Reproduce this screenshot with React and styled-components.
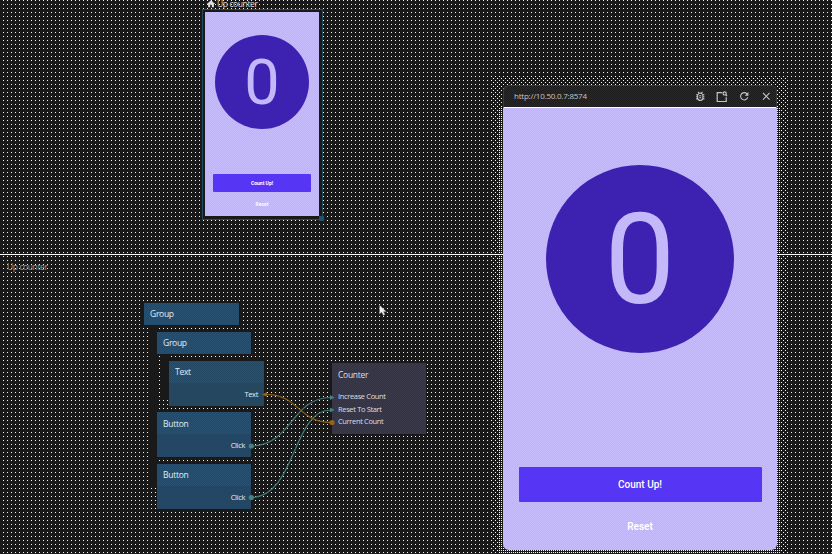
import React from "react";
import styled, { createGlobalStyle, css } from "styled-components";
import { MdClose, MdHome, MdOutlineBugReport, MdRefresh } from "react-icons/md";

const GlobalStyle = createGlobalStyle`
  * { box-sizing: border-box; }
  body { margin: 0; background: #191919; overflow: hidden; }
`;

const dots = (x, y, size = 4) =>
  css`conic-gradient(at 1px 1px, transparent 75%, #f4f6f2 0) ${x}px ${y}px / ${size}px ${size}px`;

const lilac = css`
  background: conic-gradient(#c7bcfc 25%, #bdb3f6 0 50%, #c7bcfc 0 75%, #bdb3f6 0) 0 0 / 2px 2px;
`;

const Workspace = styled.main`
  position: relative;
  display: grid;
  grid-template-rows: 254px 1px 299px;
  width: 832px;
  height: 554px;
  overflow: hidden;
  background: ${dots(3, 0)}, #191919;
  font-family: "Open Sans", "Noto Sans", sans-serif;
`;

const Stage = styled.section`
  position: relative;
`;

const Divider = styled.div`
  background: #fff;
`;

const Artboard = styled.div`
  position: absolute;
  left: 202px;
  top: 0;
`;

const ArtboardTitle = styled.div`
  display: flex;
  align-items: center;
  gap: 1px;
  height: 9px;
  padding: 0 0 2px 4px;
  color: #dcdcdc;
  font-size: 8.5px;
  letter-spacing: -0.4px;
  line-height: 8px;
  white-space: nowrap;
`;

const ArtboardFrame = styled.div`
  position: relative;
  width: 121px;
  height: 211px;
  padding: 2px 3px 3px 2px;
  border: 1px solid #244c5e;
  background: #191919;
`;

const ResizeHandle = styled.div`
  position: absolute;
  right: -2px;
  bottom: -2px;
  width: 5px;
  height: 5px;
  background: #24506b;
`;

const Screen = styled.div`
  display: flex;
  flex-direction: column;
  align-items: center;
  ${lilac}
  width: 100%;
  height: ${(p) => p.$height}px;
  padding-top: ${(p) => p.$top}px;
  font-family: Roboto, sans-serif;
`;

const CounterDisc = styled.div`
  display: flex;
  align-items: center;
  justify-content: center;
  flex: none;
  width: ${(p) => p.$size}px;
  height: ${(p) => p.$size}px;
  padding-top: ${(p) => p.$drop}px;
  border-radius: 50%;
  background: #3d22b2;
  color: #c3b8fa;
  font-size: ${(p) => p.$size * 0.67}px;
  line-height: 1;
`;

const PrimaryButton = styled.div`
  display: flex;
  align-items: center;
  justify-content: center;
  flex: none;
  width: ${(p) => p.$width}px;
  height: ${(p) => p.$height}px;
  margin-top: ${(p) => p.$gap}px;
  border-radius: 1px;
  background: #5735f5;
  color: #fff;
  font-size: ${(p) => p.$font}px;
  font-weight: ${(p) => p.$weight || 500};
`;

const TextButton = styled.div`
  margin-top: ${(p) => p.$gap}px;
  color: #fff;
  font-size: ${(p) => p.$font}px;
  font-weight: 600;
  line-height: 1.2;
`;

const GraphTitle = styled.div`
  padding: 6px 0 0 7px;
  color: #9a9a9a;
  font-size: 8.5px;
  letter-spacing: -0.4px;
  line-height: 11px;
`;

const Node = styled.div`
  position: absolute;
  left: ${(p) => p.$x}px;
  top: ${(p) => p.$y}px;
  width: ${(p) => p.$w || 95}px;
  height: ${(p) => p.$h}px;
  padding: 5px 6px 0;
  color: ${(p) => (p.$grey ? "#dedee4" : "#e3edf4")};
  box-shadow: 0 0 0 1px #191919;
  background: ${(p) =>
    p.$grey
      ? "conic-gradient(#39394a 25%, #343340 0 50%, #3b3a4a 0 75%, #343340 0) 0 0 / 2px 2px"
      : "conic-gradient(#275071 25%, #244965 0 50%, #275071 0 75%, #244965 0) 0 0 / 2px 2px"};
`;

const NodeShade = styled.div`
  position: absolute;
  inset: 22px 0 0;
  background: rgba(33, 52, 68, 0.22);
`;

const NodeName = styled.div`
  position: relative;
  padding-top: ${(p) => p.$drop || 0}px;
  font-size: 8.5px;
  letter-spacing: -0.28px;
  line-height: 11px;
`;

const Ports = styled.div`
  position: absolute;
  right: 6px;
  left: 6px;
  top: 27px;
  display: flex;
  flex-direction: column;
  align-items: ${(p) => (p.$out ? "flex-end" : "flex-start")};
  font-size: 7.5px;
  letter-spacing: -0.35px;
  line-height: 12.5px;
  white-space: nowrap;
`;

const Gutter = styled.div`
  position: absolute;
  left: ${(p) => p.$x}px;
  top: ${(p) => p.$y}px;
  width: 6px;
  height: ${(p) => p.$h}px;
  background: #191919;
`;

const Overlay = styled.svg`
  position: absolute;
  left: 0;
  top: 0;
`;

const ShadowField = styled.div`
  position: absolute;
  left: 493px;
  top: 77px;
  width: 293px;
  height: 477px;
  background: ${dots(0, 1)};
`;

const InnerShadowField = styled.div`
  position: absolute;
  left: 499px;
  top: 107px;
  width: 282px;
  height: 447px;
  background: ${dots(0, 1, 2)};
`;

const PreviewWindow = styled.section`
  position: absolute;
  left: 503px;
  top: 85px;
  width: 274px;
  height: 465px;
  overflow: hidden;
  border-radius: 6px;
  background: #202020;
`;

const PreviewBar = styled.header`
  display: flex;
  align-items: center;
  justify-content: space-between;
  height: 23px;
  padding: 0 4px 0 10px;
  border: 1px solid #3c3c3c;
  border-bottom-color: #fff;
  border-radius: 6px 6px 0 0;
  background: conic-gradient(#292929 25%, #1c1c1c 0 50%, #292929 0 75%, #1c1c1c 0) 0 0 / 2px 2px;
  color: #c6c6c6;
`;

const Address = styled.span`
  padding-bottom: 2px;
  font-size: 8px;
  letter-spacing: -0.23px;
`;

const Tools = styled.div`
  display: flex;
  align-items: center;
  gap: 9.5px;
  font-size: 12.5px;
`;

const InspectIcon = () => (
  <svg width="12" height="12" viewBox="0 0 12 12" fill="none">
    <g stroke="currentColor" strokeWidth="1.2">
      <path d="M6.3 1.7H1.2v8.8h9V6.2" />
      <circle cx="8.7" cy="2.4" r="1.6" />
      <path d="m9.6 3.6 1.5 1.6" />
    </g>
  </svg>
);

const nodes = [
  { x: 144, y: 303, h: 22, name: "Group" },
  { x: 157, y: 332, w: 94, h: 22, name: "Group" },
  { x: 169, y: 361, h: 45, name: "Text", out: ["Text"] },
  { x: 157, y: 412, w: 94, h: 45, name: "Button", drop: 1, out: ["Click"] },
  { x: 157, y: 464, w: 94, h: 45, name: "Button", out: ["Click"] },
  {
    x: 332,
    y: 363,
    w: 94,
    h: 71,
    name: "Counter",
    drop: 1,
    grey: true,
    in: ["Increase Count", "Reset To Start", "Current Count"],
  },
];

function GraphNode({ node }) {
  const ports = node.out || node.in;
  return (
    <Node $x={node.x} $y={node.y - 255} $w={node.w} $h={node.h} $grey={node.grey}>
      {ports && !node.grey && <NodeShade />}
      <NodeName $drop={node.drop}>{node.name}</NodeName>
      {ports && (
        <Ports $out={!!node.out}>
          {ports.map((port) => (
            <span key={port}>{port}</span>
          ))}
        </Ports>
      )}
    </Node>
  );
}

function Wires() {
  return (
    <Overlay width="500" height="299" viewBox="0 255 500 299" fill="none">
      <g stroke="#3f7c7a" strokeWidth="1.2">
        <path d="M251 446C292 446 291 397.5 331 397.5" />
        <path d="M251 497.5C296 497.5 292 410 331 410" />
      </g>
      <path d="M265 394.3C300 394.3 297 422.5 332 422.5" stroke="#8a5a17" strokeWidth="1.2" />
      <g fill="#438481">
        <circle cx="251.3" cy="446" r="2.6" />
        <circle cx="251.3" cy="497.5" r="2.6" />
        <path d="M330 395l4.5 2.5-4.5 2.5zM330 407.5l4.5 2.5-4.5 2.5z" />
      </g>
      <g fill="#99621a">
        <path d="M267 392v4.8l-5-2.4z" />
        <circle cx="332" cy="422.5" r="2.6" />
      </g>
      <path d="M379.5 305v9l2.1-1.8 1.8 3.2 1.7-.9-1.6-2.7h2.9z" fill="#eee" stroke="#555" strokeWidth=".4" />
    </Overlay>
  );
}

export default function App() {
  return (
    <>
      <GlobalStyle />
      <Workspace>
        <Stage>
          <Artboard>
            <ArtboardTitle>
              <MdHome size={10} />
              Up counter
            </ArtboardTitle>
            <ArtboardFrame>
              <Screen $height={204} $top={23}>
                <CounterDisc $size={94} $drop={1}>0</CounterDisc>
                <PrimaryButton $width={98} $height={18} $gap={45} $font={5} $weight={700}>
                  Count Up!
                </PrimaryButton>
                <TextButton $gap={9} $font={5}>
                  Reset
                </TextButton>
              </Screen>
              <ResizeHandle />
            </ArtboardFrame>
          </Artboard>
        </Stage>
        <Divider />
        <Stage>
          <GraphTitle>Up counter</GraphTitle>
          <Gutter $x={150} $y={72} $h={158} />
          <Gutter $x={163} $y={101} $h={42} />
          {nodes.map((node) => (
            <GraphNode key={`${node.name}-${node.y}`} node={node} />
          ))}
          <Wires />
        </Stage>
        <ShadowField />
        <InnerShadowField />
        <PreviewWindow>
          <PreviewBar>
            <Address>http://10.50.0.7:8574</Address>
            <Tools>
              <MdOutlineBugReport />
              <InspectIcon />
              <MdRefresh />
              <MdClose />
            </Tools>
          </PreviewBar>
          <Screen $height={442} $top={57}>
            <CounterDisc $size={188} $drop={3}>0</CounterDisc>
            <PrimaryButton $width={243} $height={35} $gap={114} $font={10}>
              Count Up!
            </PrimaryButton>
            <TextButton $gap={19} $font={10}>
              Reset
            </TextButton>
          </Screen>
        </PreviewWindow>
      </Workspace>
    </>
  );
}
